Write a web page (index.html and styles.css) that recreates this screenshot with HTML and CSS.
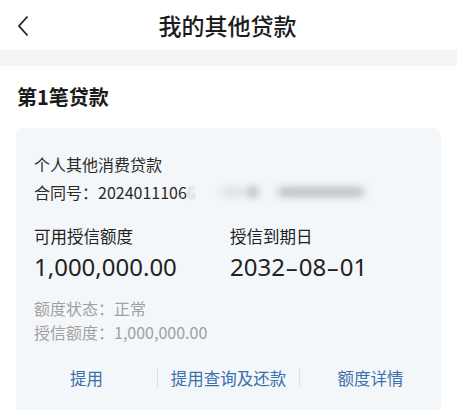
FILE: index.html
```html
<!DOCTYPE html>
<html lang="zh-CN">
<head>
    <meta charset="UTF-8">
    <meta name="viewport" content="width=device-width, initial-scale=1.0">
    <title>我的其他贷款</title>
    <link rel="stylesheet" href="styles.css">
</head>
<body>
    <div class="header">
        <span class="back">
            <svg width="14" height="22" viewBox="0 0 14 22"><path d="M11.5 1.5 L3 11 L11.5 20.5" fill="none" stroke="#222" stroke-width="1.8"/></svg>
        </span>
        <h1>我的其他贷款</h1>
    </div>
    <div class="gap"></div>

    <div class="section">
        <h2>第1笔贷款</h2>
        <div class="card">
            <div class="loan-name">个人其他消费贷款</div>
            <div class="contract">合同号：2024011106<span class="fade">6</span><span class="blur b1"></span><span class="blur b2"></span><span class="blur b3"></span></div>

            <div class="stats">
                <div class="stat">
                    <div class="stat-label">可用授信额度</div>
                    <div class="stat-value">1,000,000.00</div>
                </div>
                <div class="stat">
                    <div class="stat-label">授信到期日</div>
                    <div class="stat-value">2032<span class="dash">-</span>08<span class="dash">-</span>01</div>
                </div>
            </div>

            <div class="info">额度状态：正常</div>
            <div class="info">授信额度：1,000,000.00</div>

            <div class="actions">
                <a class="action">提用</a>
                <a class="action">提用查询及还款</a>
                <a class="action">额度详情</a>
            </div>
        </div>
    </div>
</body>
</html>
```
FILE: styles.css
```css
body {
    margin: 0;
    font-family: "Noto Sans CJK SC", "Noto Sans", sans-serif;
    background-color: #fff;
    color: #222;
}
.header {
    height: 50px;
    display: flex;
    align-items: center;
    justify-content: center;
    position: relative;
}
.back {
    position: absolute;
    left: 16px;
    top: 15px;
}
h1 {
    margin: 0 0 0 -2px;
    font-size: 23px;
    font-weight: 500;
    color: #1c1c1c;
}
.gap {
    height: 16px;
    background-color: #f4f4f5;
}
.section {
    padding: 0 16px;
}
h2 {
    margin: 18px 0 0 1px;
    font-size: 20px;
    font-weight: 700;
    line-height: 26px;
    color: #1a1a1a;
}
.card {
    margin-top: 18px;
    background-color: #f4f7fa;
    border-radius: 8px;
    padding: 22px 18px 40px;
}
.loan-name {
    font-size: 16px;
    line-height: 28px;
    color: #2a2a2a;
}
.contract {
    font-size: 16px;
    line-height: 28px;
    color: #2a2a2a;
    display: flex;
    align-items: center;
}
.fade {
    color: #ccc;
    filter: blur(1px);
}
.blur {
    display: inline-block;
    height: 8px;
    background-color: #c8c8c8;
    filter: blur(4px);
    border-radius: 4px;
}
.b1 { width: 26px; margin-left: 24px; opacity: 0.6; }
.b2 { width: 10px; margin-left: 2px; background-color: #999; }
.b3 { width: 86px; margin-left: 20px; background-color: #b0b0b0; }
.stats {
    display: grid;
    grid-template-columns: 196px 1fr;
    margin-top: 18px;
}
.stat-label {
    font-size: 16.5px;
    line-height: 24px;
    color: #222;
}
.stat-value {
    font-size: 24px;
    line-height: 34px;
    margin-top: 2px;
    color: #222;
    font-family: "Noto Sans", sans-serif;
}
.dash {
    display: inline-block;
    margin: 0 3px;
    transform: scaleX(1.7);
}
.info {
    font-size: 16px;
    line-height: 24px;
    color: #a0a0a0;
}
.stats + .info {
    margin-top: 12px;
}
.actions {
    display: flex;
    align-items: center;
    margin: 24px -18px 0;
}
.action {
    flex: 1;
    color: #3c6fae;
    font-size: 16.5px;
    line-height: 20px;
    text-align: center;
}
.action + .action {
    border-left: 1px solid #dde2e8;
}
```
